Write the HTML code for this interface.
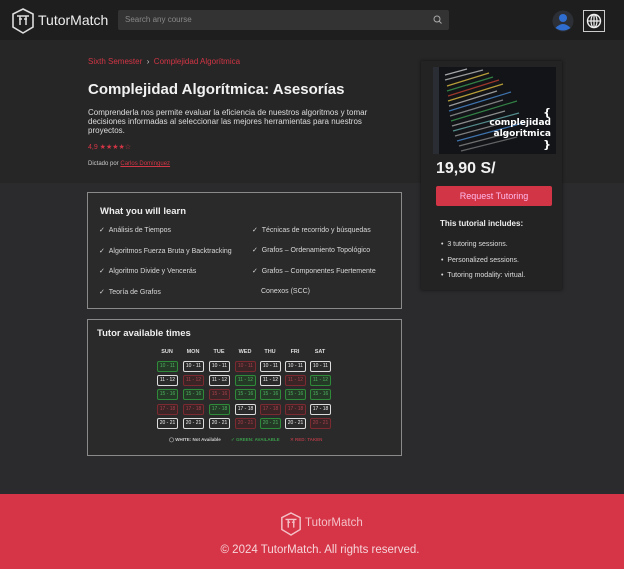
<!DOCTYPE html>
<html><head><meta charset="utf-8">
<style>
*{margin:0;padding:0;box-sizing:border-box}
body{width:624px;height:569px;overflow:hidden;background:#2b2b2d;font-family:"Liberation Sans",sans-serif;color:#e8e8e8;position:relative}
.abs{position:absolute}
.hdr{left:0;top:0;width:624px;height:40px;background:#1e1e1e}
.hero{left:0;top:40px;width:624px;height:143px;background:#262626}
.box{border:1px solid #8a8a8a;background:#2a2a2a}
.lrn{font-size:7px;color:#d8d8d8}
.cell{position:absolute;width:21px;height:11px;border:1px solid;border-radius:2px;font-size:5px;line-height:9px;text-align:center}
.W{border-color:#ddd;color:#eee}
.G{border-color:#2f8a3a;color:#4fb060;background:#243a26}
.R{border-color:#7a2a30;color:#a8414a;background:#3a2426}
.day{position:absolute;top:349px;font-size:5.5px;font-weight:bold;color:#ddd;width:24px;text-align:center}
</style></head><body>
<div class="abs hdr"></div>
<svg class="abs" style="left:11px;top:8px" width="24" height="26" viewBox="0 0 24 26"><path d="M12 1 L22 6 V19 L12 25 L2 19 V6 Z" fill="none" stroke="#ddd" stroke-width="1.6"/><path d="M6 8 H18 M9 8 V17 M15 8 V17 M8 11 H11 M13 11 H16" stroke="#ddd" stroke-width="1.5" fill="none"/></svg>
<div class="abs" style="left:38px;top:12px;font-size:14px;color:#eee">TutorMatch</div>
<div class="abs" style="left:118px;top:10px;width:331px;height:20px;background:#333;border-radius:2px"></div>
<div class="abs" style="left:125px;top:15px;font-size:8px;color:#888">Search any course</div>
<svg class="abs" style="left:433px;top:15px" width="9" height="9" viewBox="0 0 9 9"><circle cx="4" cy="4" r="3" fill="none" stroke="#aaa"/><path d="M6 6 L8.5 8.5" stroke="#aaa"/></svg>
<svg class="abs" style="left:552px;top:10px" width="22" height="22" viewBox="0 0 22 22"><circle cx="11" cy="11" r="10.5" fill="#2c3036"/><circle cx="11" cy="8" r="4" fill="#2f6ed0"/><path d="M3.5 18 Q11 10 18.5 18 Q11 23 3.5 18Z" fill="#2f6ed0"/></svg>
<div class="abs" style="left:583px;top:10px;width:22px;height:22px;border:1px solid #ccc"></div>
<svg class="abs" style="left:586px;top:13px" width="16" height="16" viewBox="0 0 16 16"><circle cx="8" cy="8" r="6.5" fill="none" stroke="#eee" stroke-width="1.4"/><ellipse cx="8" cy="8" rx="3" ry="6.5" fill="none" stroke="#eee" stroke-width="1.2"/><path d="M1.5 8 H14.5 M8 1.5 V14.5" stroke="#eee" stroke-width="1.2"/></svg>

<div class="abs hero"></div>
<div class="abs" style="left:88px;top:57px;font-size:8px;color:#d23545">Sixth Semester &nbsp;<span style="color:#ccc">›</span>&nbsp; Complejidad Algorítmica</div>
<div class="abs" style="left:88px;top:81px;font-size:15px;font-weight:bold;color:#f2f2f2">Complejidad Algorítmica: Asesorías</div>
<div class="abs" style="left:88px;top:108px;width:310px;font-size:8px;line-height:9px;color:#ddd">Comprenderla nos permite evaluar la eficiencia de nuestros algoritmos y tomar decisiones informadas al seleccionar las mejores herramientas para nuestros proyectos.</div>
<div class="abs" style="left:88px;top:143px;font-size:7px;color:#d23545">4,9 ★★★★☆</div>
<div class="abs" style="left:88px;top:161px;font-size:6px;color:#ccc">Dictado por <span style="color:#d23545;text-decoration:underline">Carlos Domínguez</span></div>

<div class="abs" style="left:421px;top:61px;width:141px;height:229px;background:#232323;box-shadow:0 0 3px #111"></div>
<svg class="abs" style="left:433px;top:67px" width="123" height="87" viewBox="0 0 123 87"><rect width="123" height="87" fill="#121418"/><rect width="6" height="87" fill="#2a2d33"/><g stroke-width="1.2" opacity="0.8"><path d="M12 8 L34 2" stroke="#ccc"/><path d="M12 13 L50 3" stroke="#bbb"/><path d="M14 19 L56 6" stroke="#e0c040"/><path d="M14 24 L60 10" stroke="#3a9a50"/><path d="M15 29 L66 13" stroke="#c04030"/><path d="M15 34 L70 17" stroke="#e0c040"/><path d="M16 39 L64 24" stroke="#bbb"/><path d="M16 44 L78 25" stroke="#4a8ad0"/><path d="M17 49 L70 33" stroke="#999"/><path d="M18 54 L84 34" stroke="#3a9a50"/><path d="M19 59 L72 44" stroke="#aaa"/><path d="M20 64 L86 46" stroke="#6aa"/><path d="M22 69 L70 56" stroke="#999"/><path d="M24 74 L90 56" stroke="#4a8ad0"/><path d="M26 79 L76 66" stroke="#888"/><path d="M28 84 L84 70" stroke="#777"/></g><text x="118" y="49" text-anchor="end" font-family="DejaVu Sans" font-weight="bold" font-size="11" fill="#fff">{</text><text x="118" y="58" text-anchor="end" font-family="DejaVu Sans" font-weight="bold" font-size="9" fill="#fff">complejidad</text><text x="118" y="69" text-anchor="end" font-family="DejaVu Sans" font-weight="bold" font-size="9" fill="#fff">algoritmica</text><text x="118" y="81" text-anchor="end" font-family="DejaVu Sans" font-weight="bold" font-size="11" fill="#fff">}</text></svg>
<div class="abs" style="left:436px;top:160px;font-size:16px;font-weight:bold;color:#f2f2f2">19,90 S/</div>
<div class="abs" style="left:436px;top:186px;width:116px;height:20px;background:#d23545;border-radius:2px;font-size:9px;line-height:20px;text-align:center;color:#fbe">Request Tutoring</div>
<div class="abs" style="left:440px;top:219px;font-size:8px;font-weight:bold;color:#eee">This tutorial includes:</div>
<div class="abs" style="left:441px;top:237px;font-size:7px;line-height:15.5px;color:#ddd">•&nbsp; 3 tutoring sessions.<br>•&nbsp; Personalized sessions.<br>•&nbsp; Tutoring modality: virtual.</div>

<div class="abs box" style="left:87px;top:192px;width:315px;height:117px"></div>
<div class="abs" style="left:100px;top:206px;font-size:9.5px;font-weight:bold;color:#eee">What you will learn</div>
<div class="abs lrn" style="left:99px;top:226px">✓ &nbsp;Análisis de Tiempos</div>
<div class="abs lrn" style="left:99px;top:247px">✓ &nbsp;Algoritmos Fuerza Bruta y Backtracking</div>
<div class="abs lrn" style="left:99px;top:267px">✓ &nbsp;Algoritmo Divide y Vencerás</div>
<div class="abs lrn" style="left:99px;top:288px">✓ &nbsp;Teoría de Grafos</div>
<div class="abs lrn" style="left:252px;top:226px">✓ &nbsp;Técnicas de recorrido y búsquedas</div>
<div class="abs lrn" style="left:252px;top:246px">✓ &nbsp;Grafos – Ordenamiento Topológico</div>
<div class="abs lrn" style="left:252px;top:267px">✓ &nbsp;Grafos – Componentes Fuertemente</div>
<div class="abs lrn" style="left:261px;top:288px">Conexos (SCC)</div>

<div class="abs box" style="left:87px;top:319px;width:315px;height:137px"></div>
<div class="abs" style="left:97px;top:328px;font-size:9.5px;font-weight:bold;color:#eee">Tutor available times</div>
<div class="day" style="left:155px">SUN</div><div class="day" style="left:181px">MON</div><div class="day" style="left:207px">TUE</div><div class="day" style="left:233px">WED</div><div class="day" style="left:258px">THU</div><div class="day" style="left:283px">FRI</div><div class="day" style="left:308px">SAT</div>
<div id="g"></div>
<div class="abs" style="left:169px;top:437px;font-size:4.5px;font-weight:bold;color:#ccc">◯ WHITE: Not Available</div>
<div class="abs" style="left:231px;top:437px;font-size:4.5px;font-weight:bold;color:#3a9a4a">✓ GREEN: AVAILABLE</div>
<div class="abs" style="left:290px;top:437px;font-size:4.5px;font-weight:bold;color:#a83a44">✕ RED: TAKEN</div>

<div class="abs" style="left:0;top:494px;width:624px;height:75px;background:#d63447"></div>
<svg class="abs" style="left:280px;top:512px" width="22" height="24" viewBox="0 0 24 26"><path d="M12 1 L22 6 V19 L12 25 L2 19 V6 Z" fill="none" stroke="#f3c0c6" stroke-width="1.6"/><path d="M6 8 H18 M9 8 V17 M15 8 V17 M8 11 H11 M13 11 H16" stroke="#f3c0c6" stroke-width="1.5" fill="none"/></svg>
<div class="abs" style="left:305px;top:517px;font-size:11.5px;color:#f3c0c6">TutorMatch</div>
<div class="abs" style="left:0;top:544px;width:640px;text-align:center;font-size:11.5px;color:#f5d5d9">© 2024 TutorMatch. All rights reserved.</div>

<script>
var rows=["GWWRWWW","WRWGWRG","GGRGGGG","RRGWRRW","WWWRGWR"],lab=["10 - 11","11 - 12","15 - 16","17 - 18","20 - 21"],xs=[157,183,209,235,260,285,310],ys=[361,375,389,404,418],h="";
rows.forEach(function(r,i){for(var j=0;j<7;j++)h+='<div class="cell '+r[j]+'" style="left:'+xs[j]+'px;top:'+ys[i]+'px">'+lab[i]+'</div>';});
document.getElementById("g").innerHTML=h;
</script>
</body></html>
